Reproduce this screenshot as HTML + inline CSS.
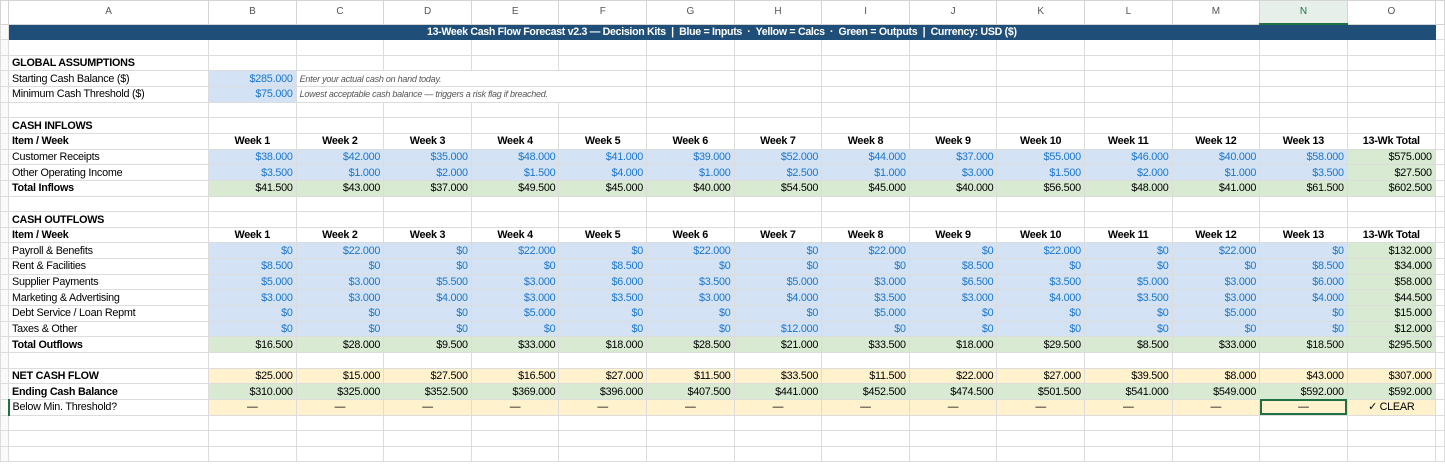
<!DOCTYPE html>
<html><head><meta charset="utf-8"><style>
body{margin:0;width:1445px;height:467px;overflow:hidden;background:#fff;font-family:"Liberation Sans",Arial,sans-serif;font-size:10.8px;color:#000}
table{position:absolute;left:0;top:0;border-collapse:collapse;table-layout:fixed;width:1445px}
td{border:1px solid #dcdcdc;height:14.65px;padding:0 3px;white-space:nowrap;overflow:visible;text-align:right;line-height:14px;letter-spacing:-0.25px;vertical-align:middle}
tr.h td{height:22px;text-align:center;color:#555;font-size:10px;background:#fff;border-color:#d4d4d4}
td.rh{padding:0;background:#fafafa}
td.l{text-align:left}
td.c{text-align:center}
.b{background:#d3e2f4;color:#1b76cc}
.g{background:#d9ead3}
.y{background:#fff2cc}
.bo{font-weight:bold}
.t td.tt{background:#1f4e79;color:#fff;font-weight:bold;text-align:center;font-size:10.6px;letter-spacing:-0.3px;border-color:#1f4e79;line-height:13px;height:14px}
.note{font-style:italic;color:#555;font-size:9px;text-align:left;overflow:visible}
.sel{outline:2px solid #1e7145;outline-offset:-2px}
</style></head><body>
<table>
<colgroup><col style="width:8px"><col style="width:200px"><col span="13" style="width:87.6px"><col style="width:88px"><col></colgroup>
<tr class="h"><td class="rh"></td><td>A</td><td>B</td><td>C</td><td>D</td><td>E</td><td>F</td><td>G</td><td>H</td><td>I</td><td>J</td><td>K</td><td>L</td><td>M</td><td style="color:#1e7145;border-bottom:2px solid #1e7145;background:#e6efe9">N</td><td>O</td><td></td></tr>
<tr class="t"><td class="rh"></td><td class="tt" colspan="15">13-Week Cash Flow Forecast v2.3 — Decision Kits &nbsp;|&nbsp; Blue = Inputs &nbsp;·&nbsp; Yellow = Calcs &nbsp;·&nbsp; Green = Outputs &nbsp;|&nbsp; Currency: USD ($)</td><td></td></tr>
<tr><td class="rh"></td><td></td><td></td><td></td><td></td><td></td><td></td><td></td><td></td><td></td><td></td><td></td><td></td><td></td><td></td><td></td><td></td></tr>
<tr><td class="rh"></td><td class="l bo">GLOBAL ASSUMPTIONS</td><td></td><td></td><td></td><td></td><td></td><td></td><td></td><td></td><td></td><td></td><td></td><td></td><td></td><td></td><td></td></tr>
<tr><td class="rh"></td><td class="l">Starting Cash Balance ($)</td><td class="b">$285.000</td><td class="note" colspan="4">Enter your actual cash on hand today.</td><td></td><td></td><td></td><td></td><td></td><td></td><td></td><td></td><td></td><td></td></tr>
<tr><td class="rh"></td><td class="l">Minimum Cash Threshold ($)</td><td class="b">$75.000</td><td class="note" colspan="4">Lowest acceptable cash balance — triggers a risk flag if breached.</td><td></td><td></td><td></td><td></td><td></td><td></td><td></td><td></td><td></td><td></td></tr>
<tr><td class="rh"></td><td></td><td></td><td></td><td></td><td></td><td></td><td></td><td></td><td></td><td></td><td></td><td></td><td></td><td></td><td></td><td></td></tr>
<tr><td class="rh"></td><td class="l bo">CASH INFLOWS</td><td></td><td></td><td></td><td></td><td></td><td></td><td></td><td></td><td></td><td></td><td></td><td></td><td></td><td></td><td></td></tr>
<tr class="bo"><td class="rh"></td><td class="l">Item / Week</td><td class="c">Week 1</td><td class="c">Week 2</td><td class="c">Week 3</td><td class="c">Week 4</td><td class="c">Week 5</td><td class="c">Week 6</td><td class="c">Week 7</td><td class="c">Week 8</td><td class="c">Week 9</td><td class="c">Week 10</td><td class="c">Week 11</td><td class="c">Week 12</td><td class="c">Week 13</td><td class="c">13-Wk Total</td><td></td></tr>
<tr><td class="rh"></td><td class="l">Customer Receipts</td><td class="b">$38.000</td><td class="b">$42.000</td><td class="b">$35.000</td><td class="b">$48.000</td><td class="b">$41.000</td><td class="b">$39.000</td><td class="b">$52.000</td><td class="b">$44.000</td><td class="b">$37.000</td><td class="b">$55.000</td><td class="b">$46.000</td><td class="b">$40.000</td><td class="b">$58.000</td><td class="g">$575.000</td><td></td></tr>
<tr><td class="rh"></td><td class="l">Other Operating Income</td><td class="b">$3.500</td><td class="b">$1.000</td><td class="b">$2.000</td><td class="b">$1.500</td><td class="b">$4.000</td><td class="b">$1.000</td><td class="b">$2.500</td><td class="b">$1.000</td><td class="b">$3.000</td><td class="b">$1.500</td><td class="b">$2.000</td><td class="b">$1.000</td><td class="b">$3.500</td><td class="g">$27.500</td><td></td></tr>
<tr><td class="rh"></td><td class="l bo">Total Inflows</td><td class="g">$41.500</td><td class="g">$43.000</td><td class="g">$37.000</td><td class="g">$49.500</td><td class="g">$45.000</td><td class="g">$40.000</td><td class="g">$54.500</td><td class="g">$45.000</td><td class="g">$40.000</td><td class="g">$56.500</td><td class="g">$48.000</td><td class="g">$41.000</td><td class="g">$61.500</td><td class="g">$602.500</td><td></td></tr>
<tr><td class="rh"></td><td></td><td></td><td></td><td></td><td></td><td></td><td></td><td></td><td></td><td></td><td></td><td></td><td></td><td></td><td></td><td></td></tr>
<tr><td class="rh"></td><td class="l bo">CASH OUTFLOWS</td><td></td><td></td><td></td><td></td><td></td><td></td><td></td><td></td><td></td><td></td><td></td><td></td><td></td><td></td><td></td></tr>
<tr class="bo"><td class="rh"></td><td class="l">Item / Week</td><td class="c">Week 1</td><td class="c">Week 2</td><td class="c">Week 3</td><td class="c">Week 4</td><td class="c">Week 5</td><td class="c">Week 6</td><td class="c">Week 7</td><td class="c">Week 8</td><td class="c">Week 9</td><td class="c">Week 10</td><td class="c">Week 11</td><td class="c">Week 12</td><td class="c">Week 13</td><td class="c">13-Wk Total</td><td></td></tr>
<tr><td class="rh"></td><td class="l">Payroll &amp; Benefits</td><td class="b">$0</td><td class="b">$22.000</td><td class="b">$0</td><td class="b">$22.000</td><td class="b">$0</td><td class="b">$22.000</td><td class="b">$0</td><td class="b">$22.000</td><td class="b">$0</td><td class="b">$22.000</td><td class="b">$0</td><td class="b">$22.000</td><td class="b">$0</td><td class="g">$132.000</td><td></td></tr>
<tr><td class="rh"></td><td class="l">Rent &amp; Facilities</td><td class="b">$8.500</td><td class="b">$0</td><td class="b">$0</td><td class="b">$0</td><td class="b">$8.500</td><td class="b">$0</td><td class="b">$0</td><td class="b">$0</td><td class="b">$8.500</td><td class="b">$0</td><td class="b">$0</td><td class="b">$0</td><td class="b">$8.500</td><td class="g">$34.000</td><td></td></tr>
<tr><td class="rh"></td><td class="l">Supplier Payments</td><td class="b">$5.000</td><td class="b">$3.000</td><td class="b">$5.500</td><td class="b">$3.000</td><td class="b">$6.000</td><td class="b">$3.500</td><td class="b">$5.000</td><td class="b">$3.000</td><td class="b">$6.500</td><td class="b">$3.500</td><td class="b">$5.000</td><td class="b">$3.000</td><td class="b">$6.000</td><td class="g">$58.000</td><td></td></tr>
<tr><td class="rh"></td><td class="l">Marketing &amp; Advertising</td><td class="b">$3.000</td><td class="b">$3.000</td><td class="b">$4.000</td><td class="b">$3.000</td><td class="b">$3.500</td><td class="b">$3.000</td><td class="b">$4.000</td><td class="b">$3.500</td><td class="b">$3.000</td><td class="b">$4.000</td><td class="b">$3.500</td><td class="b">$3.000</td><td class="b">$4.000</td><td class="g">$44.500</td><td></td></tr>
<tr><td class="rh"></td><td class="l">Debt Service / Loan Repmt</td><td class="b">$0</td><td class="b">$0</td><td class="b">$0</td><td class="b">$5.000</td><td class="b">$0</td><td class="b">$0</td><td class="b">$0</td><td class="b">$5.000</td><td class="b">$0</td><td class="b">$0</td><td class="b">$0</td><td class="b">$5.000</td><td class="b">$0</td><td class="g">$15.000</td><td></td></tr>
<tr><td class="rh"></td><td class="l">Taxes &amp; Other</td><td class="b">$0</td><td class="b">$0</td><td class="b">$0</td><td class="b">$0</td><td class="b">$0</td><td class="b">$0</td><td class="b">$12.000</td><td class="b">$0</td><td class="b">$0</td><td class="b">$0</td><td class="b">$0</td><td class="b">$0</td><td class="b">$0</td><td class="g">$12.000</td><td></td></tr>
<tr><td class="rh"></td><td class="l bo">Total Outflows</td><td class="g">$16.500</td><td class="g">$28.000</td><td class="g">$9.500</td><td class="g">$33.000</td><td class="g">$18.000</td><td class="g">$28.500</td><td class="g">$21.000</td><td class="g">$33.500</td><td class="g">$18.000</td><td class="g">$29.500</td><td class="g">$8.500</td><td class="g">$33.000</td><td class="g">$18.500</td><td class="g">$295.500</td><td></td></tr>
<tr><td class="rh"></td><td></td><td></td><td></td><td></td><td></td><td></td><td></td><td></td><td></td><td></td><td></td><td></td><td></td><td></td><td></td><td></td></tr>
<tr><td class="rh"></td><td class="l bo">NET CASH FLOW</td><td class="y">$25.000</td><td class="y">$15.000</td><td class="y">$27.500</td><td class="y">$16.500</td><td class="y">$27.000</td><td class="y">$11.500</td><td class="y">$33.500</td><td class="y">$11.500</td><td class="y">$22.000</td><td class="y">$27.000</td><td class="y">$39.500</td><td class="y">$8.000</td><td class="y">$43.000</td><td class="y">$307.000</td><td></td></tr>
<tr><td class="rh"></td><td class="l bo">Ending Cash Balance</td><td class="g">$310.000</td><td class="g">$325.000</td><td class="g">$352.500</td><td class="g">$369.000</td><td class="g">$396.000</td><td class="g">$407.500</td><td class="g">$441.000</td><td class="g">$452.500</td><td class="g">$474.500</td><td class="g">$501.500</td><td class="g">$541.000</td><td class="g">$549.000</td><td class="g">$592.000</td><td class="g">$592.000</td><td></td></tr>
<tr><td class="rh" style="border-right:2px solid #1e7145"></td><td class="l">Below Min. Threshold?</td><td class="y c">—</td><td class="y c">—</td><td class="y c">—</td><td class="y c">—</td><td class="y c">—</td><td class="y c">—</td><td class="y c">—</td><td class="y c">—</td><td class="y c">—</td><td class="y c">—</td><td class="y c">—</td><td class="y c">—</td><td class="y c sel">—</td><td class="y c">✓ CLEAR</td><td></td></tr>
<tr><td class="rh"></td><td></td><td></td><td></td><td></td><td></td><td></td><td></td><td></td><td></td><td></td><td></td><td></td><td></td><td></td><td></td><td></td></tr>
<tr><td class="rh"></td><td></td><td></td><td></td><td></td><td></td><td></td><td></td><td></td><td></td><td></td><td></td><td></td><td></td><td></td><td></td><td></td></tr>
<tr><td class="rh"></td><td></td><td></td><td></td><td></td><td></td><td></td><td></td><td></td><td></td><td></td><td></td><td></td><td></td><td></td><td></td><td></td></tr>
</table>
</body></html>
